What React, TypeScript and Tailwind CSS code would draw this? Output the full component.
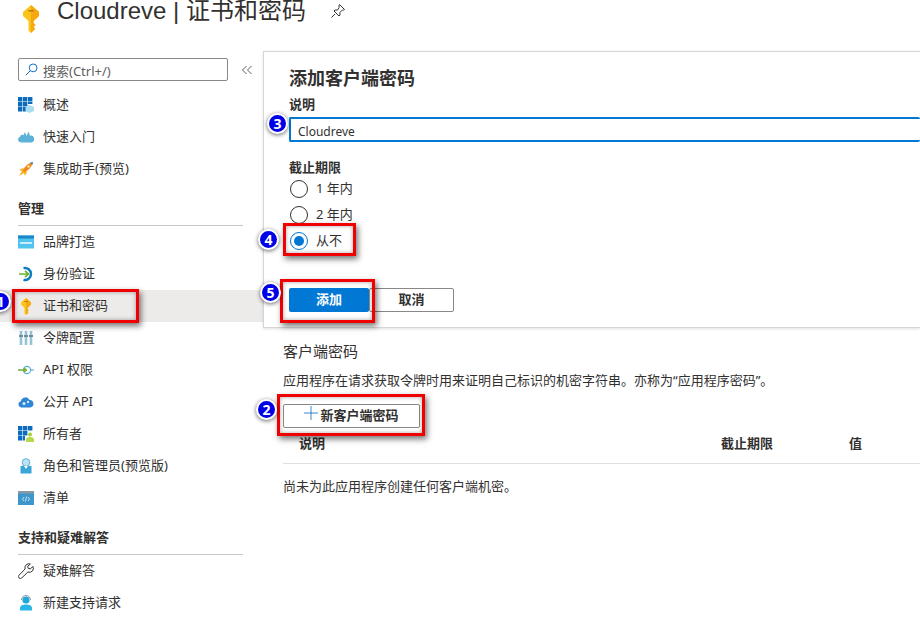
import type { ReactNode } from 'react'

const FONT = 'font-["Noto_Sans","Noto_Sans_CJK_SC",sans-serif]'

const KeyIcon = ({ className }: { className: string }) => (
  <svg viewBox="0 0 18 28" className={className}>
    <path d="M9 0 L17 7 L17 11 L11.500 16 L11.500 18 L13.500 20 L11.500 22 L13 24 L9 28 L6.500 25.500 L6.500 16 L1 11 L1 7 Z" fill="#fcc419" />
    <path d="M9 0 L17 7 L17 11 L11.500 16 L11.500 18 L13.500 20 L11.500 22 L13 24 L9 28 Z" fill="#f5a80f" />
    <rect x="6" y="5" width="6" height="1.600" rx="0.800" fill="#b87a10" />
  </svg>
)

const icons: Record<string, ReactNode> = {
  overview: (
    <svg viewBox="0 0 16 16" className="h-4 w-4">
      <path d="M0 0h4.400v4.400H0zM5 0h4.400v4.400H5zM10 0h4.400v4.400H10zM0 5h4.400v4.400H0zM5 5h4.400v4.400H5zM10 5h4.400v2H10zM0 10h4.400v4.400H0zM5 10h3v4.400H5z" fill="#0b6cbd" />
      <path d="M11.500 8l4.500 2v4l-4.500 2-4-2v-4z" fill="#a9dcf0" />
    </svg>
  ),
  cloud: (
    <svg viewBox="0 0 16 16" className="h-4 w-4">
      <path d="M3 13.500a3 3 0 0 1-1-5.800A2.600 2.600 0 0 1 5.500 6L7 3 8.500 7l2-4.500 1.500 4.200a3.400 3.400 0 0 1 1.500 6.800z" fill="#5db2d8" />
    </svg>
  ),
  rocket: (
    <svg viewBox="0 0 16 16" className="h-4 w-4">
      <path d="M5 7l-4 2 3 1-3 5 5-3 1 3 2-4z" fill="#fbb01e" />
      <path d="M5 10c1-4 5-8 10-9-1 5-5 9-9 10z" fill="#f08a1d" />
      <path d="M12 1.500L15 1l-.6 3z" fill="#3b8fc4" />
      <circle cx="10.500" cy="5.500" r="1.200" fill="#fde8a8" />
    </svg>
  ),
  brand: (
    <svg viewBox="0 0 16 16" className="h-4 w-4">
      <rect y="1.500" width="16" height="13" fill="#50c3ee" />
      <rect y="1.500" width="16" height="3" fill="#1987c8" />
      <path d="M2 8h12v2H2z" fill="#c8eefb" />
    </svg>
  ),
  auth: (
    <svg viewBox="0 0 16 16" className="h-4 w-4">
      <path d="M5.500 2.200A6 6 0 1 1 5.500 13.800" fill="none" stroke="#0b7bc4" strokeWidth="2.400" />
      <path d="M1 8h9M7 4.800L10.400 8 7 11.200" fill="none" stroke="#6cb52d" strokeWidth="1.700" />
    </svg>
  ),
  key: <KeyIcon className="h-[17px] w-3" />,
  token: (
    <svg viewBox="0 0 16 16" className="h-4 w-4">
      <path d="M1.500 1h3v14h-3zM6.500 1h3v14h-3zM11.500 1h3v14h-3z" fill="#b4deef" />
      <path d="M2.500 1h1v14h-1zM7.500 1h1v14h-1zM12.500 1h1v14h-1z" fill="#7fa6b8" />
      <path d="M1 5h4v2H1zM6 5h4v2H6zM11 5h4v2h-4z" fill="#6f8c9c" />
    </svg>
  ),
  api: (
    <svg viewBox="0 0 16 16" className="h-4 w-4">
      <circle cx="9" cy="8" r="3.600" fill="none" stroke="#5db0d8" strokeWidth="1.200" />
      <path d="M0 8h8M6 6l2.400 2L6 10" fill="none" stroke="#70b02e" strokeWidth="1.400" />
      <path d="M12.500 8H16" stroke="#5db0d8" strokeWidth="1.200" />
    </svg>
  ),
  expose: (
    <svg viewBox="0 0 16 16" className="h-4 w-4">
      <path d="M3.500 13.500a3.200 3.200 0 0 1-.6-6.300A4.600 4.600 0 0 1 11.600 6a3.800 3.800 0 0 1 .9 7.500z" fill="#2f86d6" />
      <circle cx="6" cy="9.500" r="1.500" fill="#d8edf9" />
      <circle cx="10" cy="8" r="1.200" fill="#d8edf9" />
    </svg>
  ),
  owner: (
    <svg viewBox="0 0 16 16" className="h-4 w-4">
      <path d="M0 0h4.400v4.400H0zM5 0h4.400v4.400H5zM10 0h4.400v4.400H10zM0 5h4.400v4.400H0zM5 5h4.400v4.400H5zM0 10h4.400v4.400H0zM5 10h2v4.400H5z" fill="#0b6cbd" />
      <circle cx="12" cy="8.500" r="2" fill="#a7cf3a" />
      <path d="M8 16v-2.500a4 2.500 0 0 1 8 0V16z" fill="#b8d84a" />
    </svg>
  ),
  role: (
    <svg viewBox="0 0 16 16" className="h-4 w-4">
      <circle cx="8" cy="4.500" r="3.800" fill="#bfe3f2" stroke="#5db0d8" />
      <path d="M2.500 8h11v7.500h-11z" fill="#3ba5d8" />
      <path d="M6 8l2 3 2-3z" fill="#fff" />
    </svg>
  ),
  list: (
    <svg viewBox="0 0 16 16" className="h-4 w-4">
      <rect y="1" width="16" height="14" fill="#3d97cc" />
      <rect y="1" width="16" height="2.500" fill="#8a9aa4" />
      <path d="M6 7l-1.500 2L6 11M10 7l1.500 2L10 11M8.500 6.500l-1 5" fill="none" stroke="#dff1fa" strokeWidth="0.800" />
    </svg>
  ),
  wrench: (
    <svg viewBox="0 0 16 16" className="h-4 w-4">
      <path d="M15 3.500l-2.800 2.400-2-.6-.5-2L12.300 1a4 4 0 0 0-5.200 5L1 12.200a1.900 1.900 0 0 0 2.800 2.700L9.900 9a4 4 0 0 0 5.100-5.500z" fill="none" stroke="#333" strokeWidth="1" />
    </svg>
  ),
  support: (
    <svg viewBox="0 0 16 16" className="h-4 w-4">
      <circle cx="8" cy="5" r="3.600" fill="#22a8d8" />
      <path d="M3.500 5a4.500 4.500 0 0 1 9 0" fill="none" stroke="#8a9aa4" strokeWidth="1" />
      <path d="M2 15.500v-2.500c0-2.500 3-3.500 6-3.500s6 1 6 3.500v2.500z" fill="#28b6e6" />
    </svg>
  ),
}

const NavRow = ({ icon, label, active }: { icon: string; label: string; active?: boolean }) => (
  <div className={`flex h-8 items-center pl-[18px] ${active ? 'bg-[#edebe9]' : ''}`}>
    <span className="flex w-[25px] shrink-0 items-center">
      <span className="flex w-4 justify-center">{icons[icon]}</span>
    </span>
    <span className="text-[13px] text-[#323130]">{label}</span>
  </div>
)

const NavHeading = ({ label }: { label: string }) => (
  <div className="mr-[20px] ml-[18px] flex h-[41px] items-end border-b border-[#c8c6c4] pb-[8px] text-[13px] leading-[18px] font-semibold text-[#323130]">
    {label}
  </div>
)

const Radio = ({ label, checked }: { label: string; checked?: boolean }) => (
  <div className="flex h-[26px] items-center pl-[1px]">
    <span className={`flex h-[18px] w-[18px] items-center justify-center rounded-full border ${checked ? 'border-[#0078d4]' : 'border-[#323130]'}`}>
      {checked && <span className="h-[10px] w-[10px] rounded-full bg-[#0078d4]" />}
    </span>
    <span className="ml-[8px] text-[13px] text-[#323130]">{label}</span>
  </div>
)

const Mark = ({ className }: { className: string }) => (
  <div className={`absolute border-[3px] border-[#f00000] shadow-[2px_3px_6px_rgba(0,0,0,0.55),inset_0_0_4px_rgba(0,0,0,0.35)] ${className}`} />
)

const Badge = ({ n, className }: { n: number; className: string }) => (
  <div className={`absolute flex h-[21px] w-[21px] items-center justify-center rounded-full border-2 border-white bg-[#0000e6] text-[14px] leading-none font-bold text-white shadow-[0_1px_4px_rgba(0,0,0,0.6)] ${className}`}>
    {n}
  </div>
)

export default function App() {
  return (
    <div className={`relative flex h-[638px] w-[920px] flex-col overflow-hidden bg-white ${FONT}`}>
      {/* 标题 */}
      <header className="flex h-[51px] shrink-0 items-start pl-[22px]">
        <KeyIcon className="mt-[5px] h-[28px] w-[18px]" />
        <h1 className='mt-[-7px] ml-[17px] font-["Liberation_Sans","Noto_Sans_CJK_SC",sans-serif] text-[24px] leading-[36px] text-[#323130]'>
          Cloudreve | 证书和密码
        </h1>
        <svg viewBox="0 0 16 16" className="mt-[3px] ml-[24px] h-4 w-4" fill="none" stroke="#323130" strokeWidth="1">
          <path d="M9.500 1.500l5 5-1 .6-1-.2-2.600 2.600.1 2.500-1 1-5-5 1-1 2.500.1L9.100 4.500 8.900 3.100zM5 11l-3.500 3.500" />
        </svg>
      </header>

      <div className="flex min-h-0 flex-1">
        {/* 侧边栏 */}
        <aside className="w-[263px] shrink-0">
          <div className="flex h-[38px] items-start pt-[7px] pl-[18px]">
            <div className="flex h-[23px] w-[210px] items-center rounded-[2px] border border-[#8a8886] pl-[6px]">
              <svg viewBox="0 0 16 16" className="h-[13px] w-[13px]" fill="none" stroke="#0b6cbd" strokeWidth="1.200">
                <circle cx="10" cy="6" r="4.800" />
                <path d="M6.500 9.500L1 15" />
              </svg>
              <span className="mt-[2px] ml-[5px] text-[13px] leading-[18px] text-[#605e5c]">搜索(Ctrl+/)</span>
            </div>
            <svg viewBox="0 0 12 10" className="mt-[7px] ml-[13px] h-[10px] w-[12px]" fill="none" stroke="#605e5c" strokeWidth="1">
              <path d="M5.500 1L1.500 5l4 4M10.500 1l-4 4 4 4" />
            </svg>
          </div>
          <NavRow icon="overview" label="概述" />
          <NavRow icon="cloud" label="快速入门" />
          <NavRow icon="rocket" label="集成助手(预览)" />
          <NavHeading label="管理" />
          <NavRow icon="brand" label="品牌打造" />
          <NavRow icon="auth" label="身份验证" />
          <NavRow icon="key" label="证书和密码" active />
          <NavRow icon="token" label="令牌配置" />
          <NavRow icon="api" label="API 权限" />
          <NavRow icon="expose" label="公开 API" />
          <NavRow icon="owner" label="所有者" />
          <NavRow icon="role" label="角色和管理员(预览版)" />
          <NavRow icon="list" label="清单" />
          <NavHeading label="支持和疑难解答" />
          <NavRow icon="wrench" label="疑难解答" />
          <NavRow icon="support" label="新建支持请求" />
        </aside>

        {/* 主区域 */}
        <main className="min-w-0 flex-1">
          <section className="h-[277px] border-t border-b border-l border-[#d6d6d6] pt-[14px] pl-[25px] shadow-[0_1px_3px_rgba(0,0,0,0.12)]">
            <h2 className="text-[18px] leading-[24px] font-bold text-[#323130]">添加客户端密码</h2>
            <div className="mt-[5px] text-[13px] leading-[18px] font-semibold text-[#323130]">说明</div>
            <div className="mt-[4px] flex h-[25px] items-center rounded-[2px] border-2 border-r-0 border-[#0078d4] pt-[4px] pl-[7px] text-[12px] text-[#323130]">
              Cloudreve
            </div>
            <div className="mt-[16px] text-[13px] leading-[18px] font-semibold text-[#323130]">截止期限</div>
            <div>
              <Radio label="1 年内" />
              <Radio label="2 年内" />
              <Radio label="从不" checked />
            </div>
            <div className="mt-[34px] flex">
              <div className="flex h-[24px] w-[80px] items-center justify-center rounded-[2px] bg-[#0078d4] text-[13px] font-semibold text-white">添加</div>
              <div className="flex h-[24px] w-[85px] items-center justify-center rounded-[2px] border border-[#8a8886] text-[13px] font-semibold text-[#323130]">取消</div>
            </div>
          </section>

          <section className="pl-[20px]">
            <h3 className="mt-[12px] text-[15px] leading-[22px] text-[#323130]">客户端密码</h3>
            <p className="mt-[9px] text-[13px] leading-[18px] whitespace-nowrap text-[#323130]">
              应用程序在请求获取令牌时用来证明自己标识的机密字符串。亦称为“应用程序密码”。
            </p>
            <div className="mt-[15px] flex h-[24px] w-[137px] items-center justify-center rounded-[2px] border border-[#8a8886]">
              <svg viewBox="0 0 14 14" className="mt-[-6px] h-[14px] w-[14px]" stroke="#0b6cbd" strokeWidth="0.800">
                <path d="M7 0v14M0 7h14" />
              </svg>
              <span className="ml-[2px] text-[13px] font-semibold text-[#323130]">新客户端密码</span>
            </div>
            <div className="flex h-[36px] items-center border-b border-[#e1dfdd] pb-[3px] text-[13px] font-semibold text-[#323130]">
              <span className="ml-[16px] w-[422px]">说明</span>
              <span className="w-[128px]">截止期限</span>
              <span>值</span>
            </div>
            <p className="mt-[13px] text-[13px] leading-[18px] text-[#323130]">尚未为此应用程序创建任何客户端机密。</p>
          </section>
        </main>
      </div>

      {/* 标注 */}
      <Mark className="top-[289px] left-[12px] h-[34px] w-[127px]" />
      <Mark className="top-[394px] left-[277px] h-[42px] w-[148px]" />
      <Mark className="top-[223px] left-[283px] h-[33px] w-[73px]" />
      <Mark className="top-[279px] left-[280px] h-[44px] w-[95px]" />
      <Badge n={1} className="top-[291px] left-[-10px]" />
      <Badge n={2} className="top-[399px] left-[256px]" />
      <Badge n={3} className="top-[113px] left-[267px]" />
      <Badge n={4} className="top-[229px] left-[258px]" />
      <Badge n={5} className="top-[282px] left-[260px]" />
    </div>
  )
}
